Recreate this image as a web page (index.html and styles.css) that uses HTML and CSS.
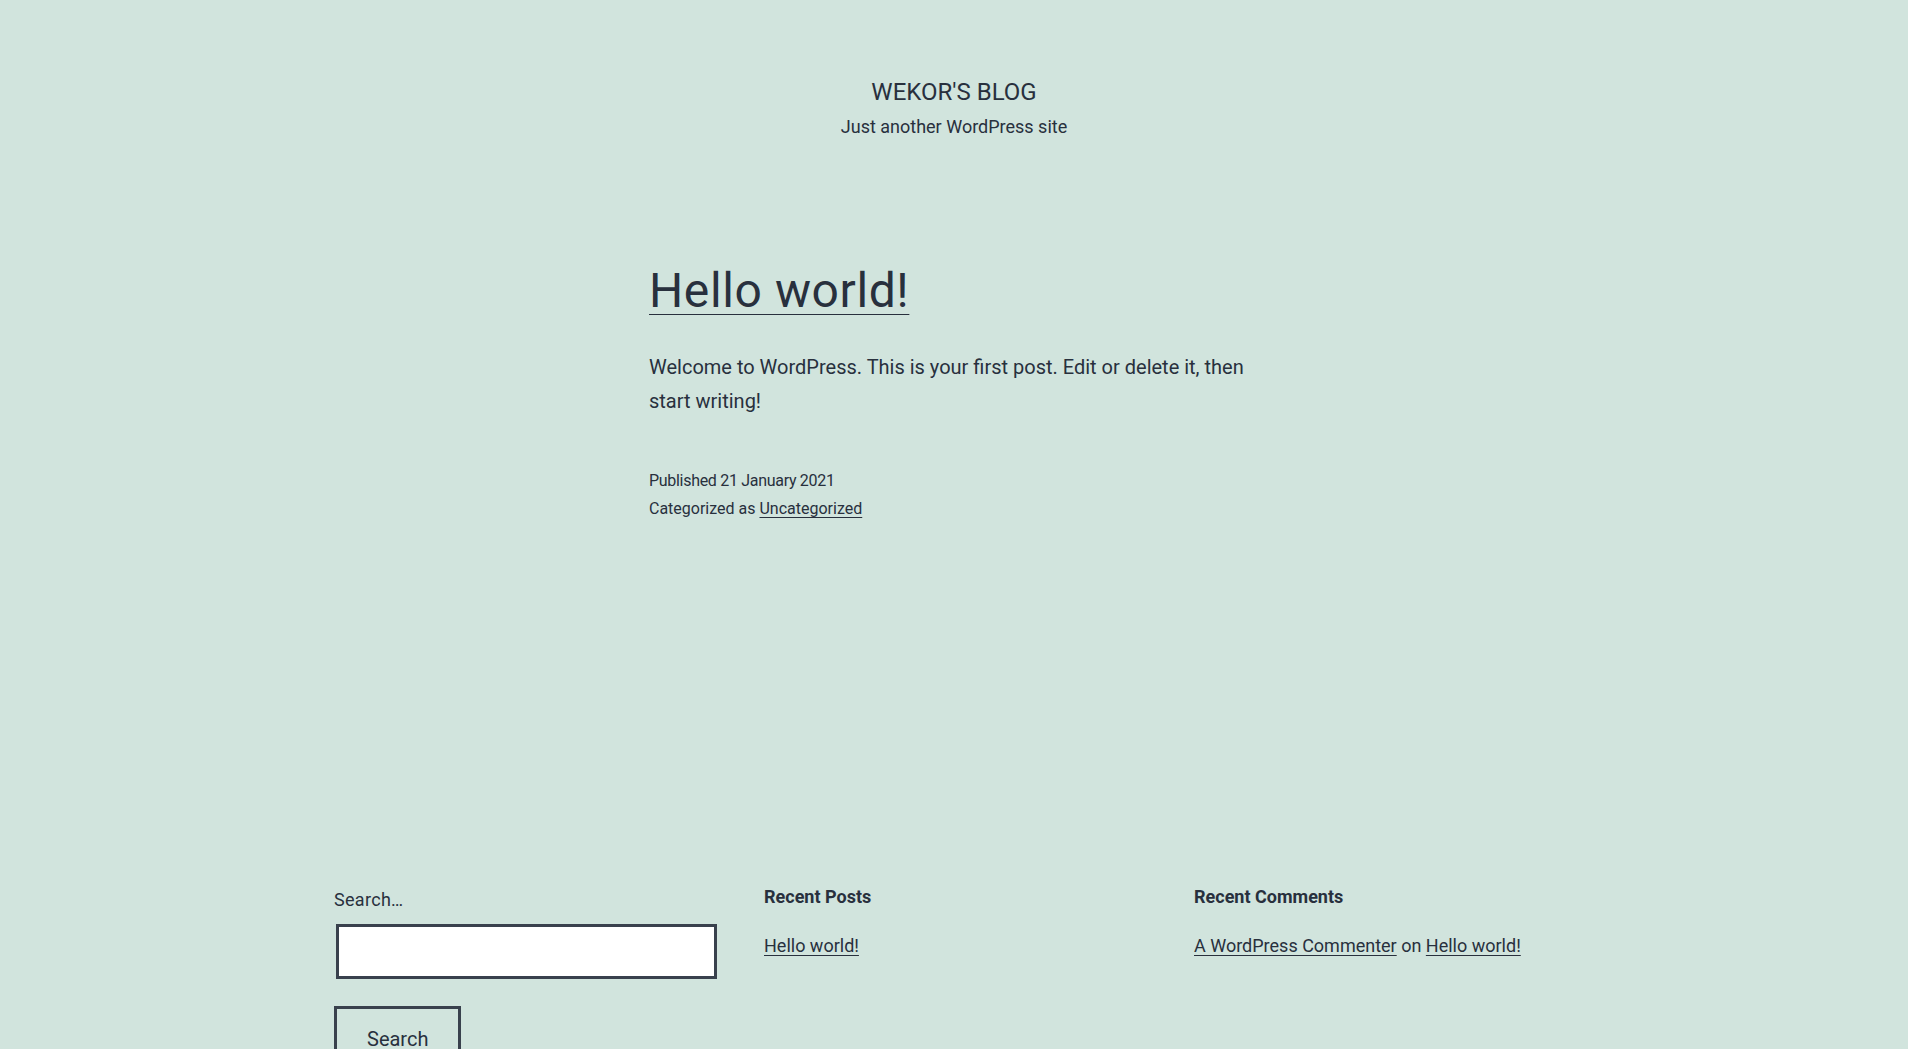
FILE: index.html
```html
<!DOCTYPE html>
<html lang="en">
<head>
<meta charset="utf-8">
<title>Wekor's Blog</title>
<link rel="stylesheet" href="styles.css">
</head>
<body>
<header class="site-header">
  <p class="site-title">Wekor's Blog</p>
  <p class="site-description">Just another WordPress site</p>
</header>
<main class="site-main">
  <article class="post">
    <h2 class="entry-title"><a href="#">Hello world!</a></h2>
    <div class="entry-content">
      <p>Welcome to WordPress. This is your first post. Edit or delete it, then start writing!</p>
    </div>
    <footer class="entry-footer">
      <div class="meta-line">Published 21 January 2021</div>
      <div class="meta-line">Categorized as <a href="#">Uncategorized</a></div>
    </footer>
  </article>
</main>
<aside class="widget-area">
  <section class="widget widget-search">
    <form class="search-form">
      <label class="search-label" for="s">Search…</label>
      <input class="search-field" id="s" type="search">
      <button class="search-submit" type="button">Search</button>
    </form>
  </section>
  <section class="widget">
    <h2 class="widget-title">Recent Posts</h2>
    <ul class="widget-list">
      <li><a href="#">Hello world!</a></li>
    </ul>
  </section>
  <section class="widget">
    <h2 class="widget-title">Recent Comments</h2>
    <ul class="widget-list">
      <li><a href="#">A WordPress Commenter</a> on <a href="#">Hello world!</a></li>
    </ul>
  </section>
</aside>
</body>
</html>
```
FILE: styles.css
```css
html, body {
  margin: 0;
  padding: 0;
}
body {
  background: #d1e4dd;
  color: #28303d;
  font-family: Roboto, "Liberation Sans", sans-serif;
  font-size: 20px;
  overflow: hidden;
}
a {
  color: #28303d;
  text-decoration: underline;
  text-decoration-thickness: 1px;
  text-underline-offset: 3px;
}
.site-header {
  padding-top: 77px;
  text-align: center;
}
.site-title {
  margin: 0;
  font-size: 24px;
  line-height: 30px;
  text-transform: uppercase;
}
.site-description {
  margin: 7px 0 0;
  font-size: 18px;
  line-height: 25px;
}
.post {
  width: 610px;
  margin: 121px auto 0;
}
.entry-title {
  margin: 0;
  font-size: 48px;
  font-weight: 400;
  line-height: 62px;
  letter-spacing: 0.6px;
}
.entry-title a {
  text-underline-offset: 6.5px;
}
.entry-content p {
  margin: 28px 0 0;
  font-size: 20px;
  line-height: 34px;
}
.entry-footer {
  margin-top: 49px;
  font-size: 16px;
  line-height: 28px;
}
.meta-line:first-child {
  letter-spacing: -0.3px;
}
.widget-area {
  width: 1240px;
  margin: 362px auto 0;
  display: grid;
  grid-template-columns: repeat(3, minmax(0, 1fr));
  column-gap: 50px;
  font-size: 18px;
}
.widget-title {
  margin: 0;
  font-size: 18px;
  font-weight: 700;
  line-height: 23.4px;
}
.widget-list {
  margin: 23px 0 0;
  padding: 0;
  list-style: none;
  line-height: 30.6px;
}
.search-label {
  display: block;
  line-height: 30.6px;
  letter-spacing: 0.3px;
}
.search-field {
  display: block;
  box-sizing: border-box;
  width: 381px;
  height: 55px;
  margin: 8px 0 0 2px;
  border: 3px solid #39414d;
  background: #fff;
  font: inherit;
  padding: 0 10px;
}
.search-submit {
  display: block;
  margin-top: 27px;
  padding: 15px 30px;
  border: 3px solid #39414d;
  background: transparent;
  color: #28303d;
  font-family: Roboto, "Liberation Sans", sans-serif;
  font-size: 20px;
  line-height: 30px;
}
```
